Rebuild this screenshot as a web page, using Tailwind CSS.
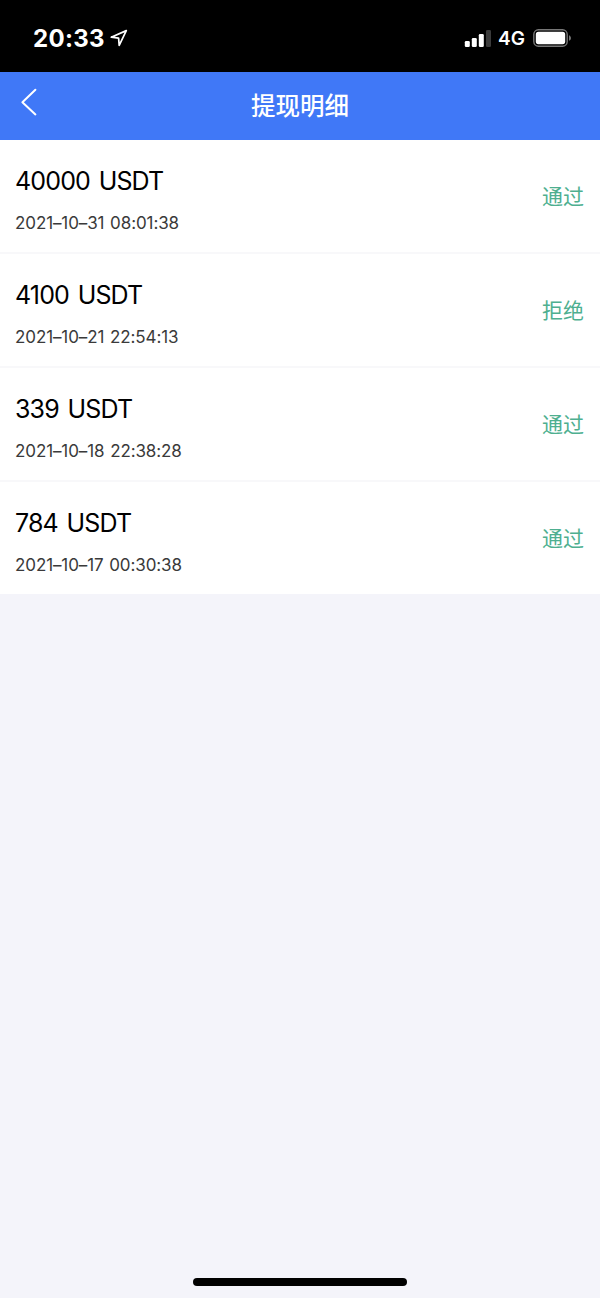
<!DOCTYPE html>
<html lang="zh-CN">
<head>
    <meta charset="UTF-8">
    <meta name="viewport" content="width=device-width, initial-scale=1.0">
    <title>提现明细</title>
    <script src="https://cdn.jsdelivr.net/npm/@tailwindcss/browser@4"></script>
</head>
<body class="bg-[#f4f4fa] text-black min-h-screen flex flex-col overflow-hidden font-['Inter','Noto_Sans_CJK_SC',sans-serif]">
    <!-- Status bar -->
    <div class="h-[72px] bg-black text-white flex items-center justify-between pl-[33px] pr-7 pt-1">
        <div class="flex items-center gap-[5px]">
            <span class="pt-0.5 text-2xl leading-6 font-bold tracking-[0.3px]">20:33</span>
            <svg class="w-[18px] h-[18px]" viewBox="0 0 18 18" fill="none" stroke="currentColor" stroke-width="1.7" stroke-linejoin="round">
                <path d="M16.3 1.6 1.2 8.2l7.4.9.6 7.3z" />
            </svg>
        </div>
        <div class="flex items-center">
            <svg class="w-[27px] h-[18px]" viewBox="0 0 27 18" fill="currentColor">
                <rect x=".8" y="12" width="5" height="6" rx="1.3" />
                <rect x="7.8" y="9" width="5" height="9" rx="1.3" />
                <rect x="14.8" y="5" width="5" height="13" rx="1.3" />
                <rect x="22" y="1" width="5" height="17" rx="1.3" fill="#3b3b3b" />
            </svg>
            <span class="ml-[7px] pt-0.5 text-[19px] leading-5 font-semibold">4G</span>
            <svg class="ml-2 w-[39px] h-[18px]" viewBox="0 0 39 18">
                <rect x=".8" y=".8" width="33.4" height="16.4" rx="4.6" fill="none" stroke="#777" stroke-width="1.4" />
                <rect x="2.8" y="2.8" width="29.4" height="12.4" rx="2.6" fill="#fff" />
                <path d="M36 6.2c2.6 1 2.6 4.6 0 5.6z" fill="#777" />
            </svg>
        </div>
    </div>

    <!-- Header -->
    <header class="h-[68px] bg-[#4078f7] text-white grid grid-cols-[1fr_auto_1fr] items-center px-5">
        <svg class="w-[18px] h-7 -mt-2" viewBox="0 0 18 28" fill="none" stroke="currentColor" stroke-width="2" stroke-linecap="round" stroke-linejoin="round">
            <path d="M15.4 1.8 2.4 14.2l13 12.2" />
        </svg>
        <h1 class="text-[24.5px] leading-8 font-medium">提现明细</h1>
    </header>

    <!-- Withdrawal records -->
    <ul class="bg-white font-[370]">
        <li class="h-[114px] border-b-2 border-[#f8f8fa] pl-[15px] pr-4 flex items-center justify-between">
            <div class="pt-[7px]">
                <p class="text-[25px] leading-8 tracking-[-0.85px] [word-spacing:2.5px]">40000 USDT</p>
                <p class="mt-3.5 text-[17px] leading-6 tracking-[-0.1px] [word-spacing:1px] text-[#3a3a3a]">2021–10–31 08:01:38</p>
            </div>
            <span class="pt-0.5 text-[21px] leading-8 text-[#4eaf90] font-normal">通过</span>
        </li>
        <li class="h-[114px] border-b-2 border-[#f8f8fa] pl-[15px] pr-4 flex items-center justify-between">
            <div class="pt-[7px]">
                <p class="text-[25px] leading-8 tracking-[-0.85px] [word-spacing:2.5px]">4100 USDT</p>
                <p class="mt-3.5 text-[17px] leading-6 tracking-[-0.1px] [word-spacing:1px] text-[#3a3a3a]">2021–10–21 22:54:13</p>
            </div>
            <span class="pt-0.5 text-[21px] leading-8 text-[#4eaf90] font-normal">拒绝</span>
        </li>
        <li class="h-[114px] border-b-2 border-[#f8f8fa] pl-[15px] pr-4 flex items-center justify-between">
            <div class="pt-[7px]">
                <p class="text-[25px] leading-8 tracking-[-0.85px] [word-spacing:2.5px]">339 USDT</p>
                <p class="mt-3.5 text-[17px] leading-6 tracking-[-0.1px] [word-spacing:1px] text-[#3a3a3a]">2021–10–18 22:38:28</p>
            </div>
            <span class="pt-0.5 text-[21px] leading-8 text-[#4eaf90] font-normal">通过</span>
        </li>
        <li class="h-[112px] pl-[15px] pr-4 flex items-center justify-between">
            <div class="pt-[7px]">
                <p class="text-[25px] leading-8 tracking-[-0.85px] [word-spacing:2.5px]">784 USDT</p>
                <p class="mt-3.5 text-[17px] leading-6 tracking-[-0.1px] [word-spacing:1px] text-[#3a3a3a]">2021–10–17 00:30:38</p>
            </div>
            <span class="pt-0.5 text-[21px] leading-8 text-[#4eaf90] font-normal">通过</span>
        </li>
    </ul>

    <!-- Home indicator -->
    <div class="mt-auto mb-3 mx-auto w-[214px] h-2 rounded-full bg-black"></div>
</body>
</html>
